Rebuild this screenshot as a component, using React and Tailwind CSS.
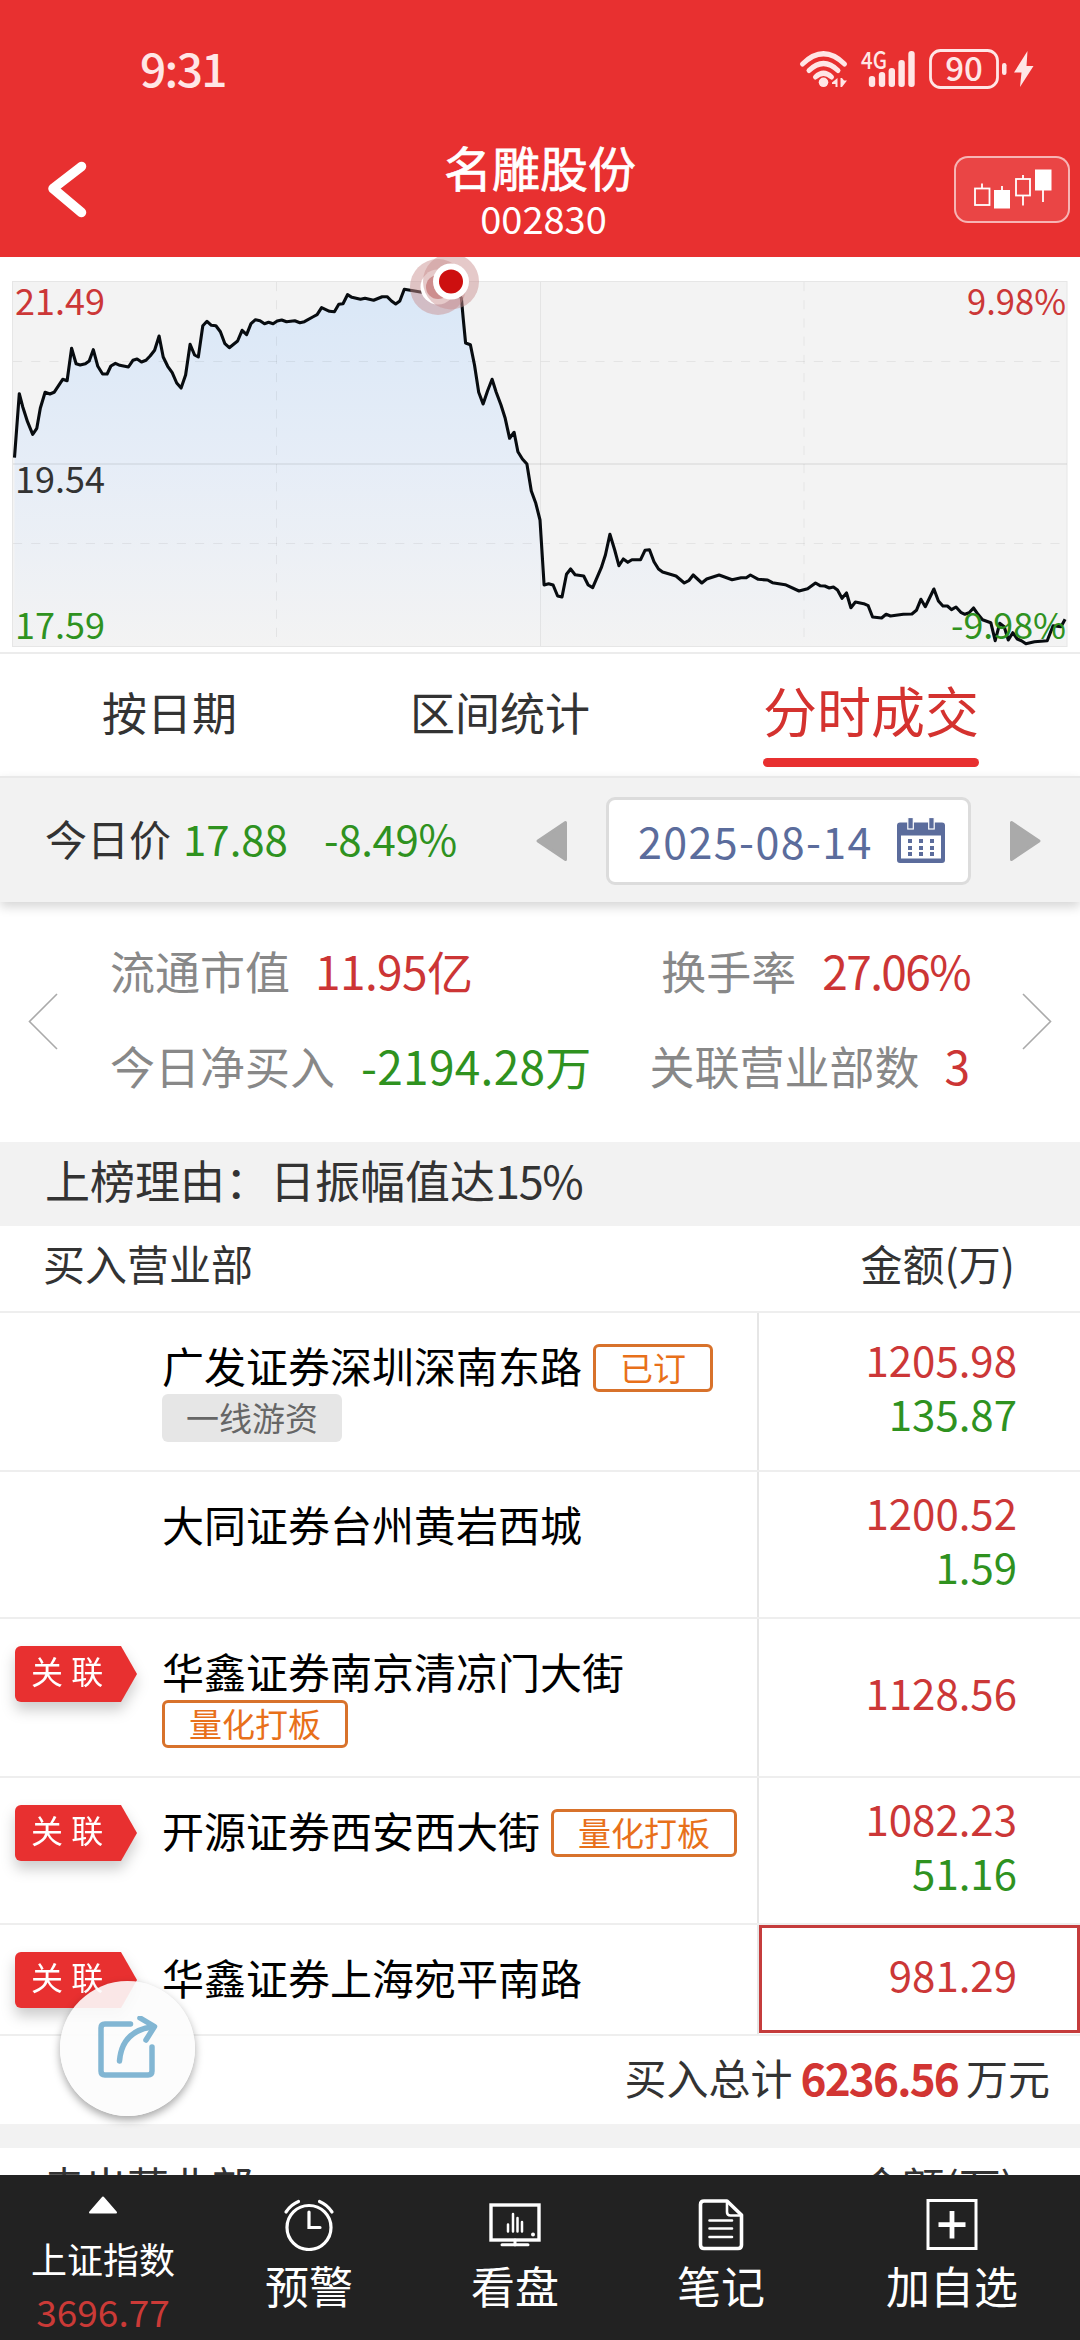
import clsx from 'clsx';

const PRICE_LINE =
  '14.5,200.7 19.3,136.7 22.7,149.7 27.5,164.7 32.7,177.3 36.8,171.3 40.3,151.3 45.1,135.3 49.9,137 54.1,135.3 62.7,122.3 67.1,123.7 71.6,91.3 76.1,106.7 80.2,108 85.4,106.7 89.2,104 93.3,92.7 97.8,109.3 102.6,117 107.1,117 110.9,109 115.4,106.3 119.8,108.3 128.4,110 132.9,103.3 137.1,102 141.5,105 146,103.3 150.1,99 154.6,93.3 159.1,79 163.2,100 167.7,109.3 172.2,115.7 176.7,126 181.1,131 185.6,118 190.1,87.3 194.6,98 198.3,100 202.8,68.7 207,64.3 211.4,68.3 215.9,68.7 220.4,74.7 224.9,86.7 229.3,90.7 237.6,84 242.1,73.3 246.6,77.7 251,66.7 255.5,62.7 260,63.7 264.5,66.7 268.6,65.3 273.1,66.7 277.2,64 281.7,63 286.5,64.7 294.8,63.7 299.9,65.7 304.4,64.7 312.7,60 317.1,57.7 321.6,50.7 329.5,54.3 334.4,54.7 338.8,47.3 343,46.7 347.5,37.7 351.9,40.3 360.5,42.3 365,41.3 373.6,43.3 382.2,39.7 387.1,39.7 391.5,44 395.7,47 399.8,44 404.3,32.3 413.2,33.7 421.8,35.3 450.8,24.3 461.4,41.3 463.2,61.3 465.6,86 470.4,87.7 474.5,108 478.7,135.3 483.1,147 487.6,133.7 492.1,122.3 496.2,135.3 501,148 505.2,161.3 509.6,181.3 514.1,175.3 517.9,194.7 522.4,202 526.9,207 531.3,234 535.8,246.3 540,263 544.1,328 548.6,326.7 553.1,328 557.6,339 562,340 566.5,317.3 570.6,312 575.1,317.7 583.7,319 588.2,328 592.7,330.7 601.3,310.7 605.4,298 609.9,277.3 614.7,293 618.9,308.7 623.3,302 627.8,305.3 631.9,302.7 640.6,302.7 645,293.3 649.5,292.7 654,304.7 658.5,312 662.6,315 676,319 684.3,326 689.1,323.3 693.2,318 701.8,326 706.7,322 719.1,318 732.1,322.7 741.1,320.7 746.3,320.7 750.4,318 758.3,322.3 767.6,323 772.4,325.7 785.2,327.7 799,334 807.6,331.7 815.5,326 820,328.7 824.8,329 829.3,331 833.4,330 837.5,333 842,341.3 846.5,336 850.9,350.7 855.4,345 863.7,346.7 868.2,348.7 872.6,360 881.6,361 886.1,357.3 890.5,359 903.3,357.3 911.9,357 916.4,353.3 920.9,342.3 925.3,349.7 933.9,332 938.4,344 942.9,349 947.4,349 951.5,352.7 956,350 960.8,355.3 964.9,357.3 969.1,355.7 973.5,351 978,357.3 982.5,362.7 990.8,365.7 995.2,383.7 999.7,366.3 1004.2,369.7 1008.3,383 1012.8,375.7 1017.3,382 1021.4,383.7 1025.9,386.7 1034.5,384.7 1047.2,383.7 1053.1,368.7 1061,369.7 1065.1,362.3';

const rows = [
  {
    name: '广发证券深圳深南东路',
    height: 'h-[159px]',
    tags: [{ text: '已订', type: 'orange' }, { text: '一线游资', type: 'gray' }],
    buy: '1205.98',
    sell: '135.87',
  },
  { name: '大同证券台州黄岩西城', height: 'h-[147px]', tags: [], buy: '1200.52', sell: '1.59' },
  {
    name: '华鑫证券南京清凉门大街',
    height: 'h-[159px]',
    linked: true,
    tags: [{ text: '量化打板', type: 'orange' }],
    buy: '1128.56',
  },
  {
    name: '开源证券西安西大街',
    height: 'h-[147px]',
    linked: true,
    tags: [{ text: '量化打板', type: 'orange' }],
    buy: '1082.23',
    sell: '51.16',
  },
  { name: '华鑫证券上海宛平南路', height: 'h-[111px]', linked: true, tags: [], buy: '981.29', active: true },
];

function StatusBar() {
  return (
    <div className="h-[140px] pt-[42px] pl-[140px] pr-[44px] flex justify-between text-[#ffe6e6]">
      <span className="text-[46px] leading-[50px] font-medium tracking-[-1.6px]">9:31</span>
      <svg width="236" height="44" viewBox="800 47 236 44" className="mt-[5px] overflow-visible" fill="currentColor">
        {/* wifi */}
        <g fill="none" stroke="currentColor" strokeWidth="5" strokeLinecap="round">
          <path d="M802.5 64 Q823.5 43.5 844.5 64" />
          <path d="M809 70.5 Q823.5 56.5 838 70.5" />
          <path d="M815.5 77 Q823.5 69.5 831.5 77" />
        </g>
        <circle cx="823.5" cy="82.3" r="4.8" />
        <path d="M837.5 78v9h-2v-3h-3.5v-1.5zM840.5 78h1.5l2 2.5h3l-5 6.5h-1.5z" />
        {/* signal */}
        <text x="861" y="69" fontSize="24" fontWeight="500" textLength="26" lengthAdjust="spacingAndGlyphs">4G</text>
        <rect x="868.8" y="76" width="6.4" height="11" rx="3" />
        <rect x="878.8" y="72" width="6.4" height="15" rx="3" />
        <rect x="888.6" y="68" width="6.4" height="19" rx="3" />
        <rect x="898.4" y="60" width="6.4" height="27" rx="3" />
        <rect x="908.3" y="51" width="6.4" height="36" rx="3" />
        {/* battery */}
        <rect x="930.5" y="50.5" width="67" height="37" rx="10" fill="none" stroke="currentColor" strokeWidth="2.8" />
        <rect x="1002" y="63" width="4.5" height="12" rx="2.2" />
        <text x="964" y="80.8" fontSize="33" fontWeight="500" textAnchor="middle">90</text>
        <path d="M1027.5 51 L1014 72.5 H1021.5 L1020 87 L1033.5 66 H1026.5 Z" />
      </svg>
    </div>
  );
}

function Header() {
  return (
    <header className="h-[257px] bg-[#e83030] text-white">
      <StatusBar />
      <div className="h-[117px] pl-[46px] pr-[10px] flex justify-between">
        <svg width="42" height="62" viewBox="0 0 42 62" className="mt-[18px] mr-[74px]" fill="none" stroke="currentColor" strokeWidth="9.5" strokeLinecap="round" strokeLinejoin="round">
          <path d="M35.5 8.5 L7 30.5 L35.5 54.5" />
        </svg>
        <div className="flex flex-col items-center mr-[36px]">
          <h1 className="text-[48px] leading-[52px] [-webkit-text-stroke:0.7px_white]">名雕股份</h1>
          <span className="text-[38px] leading-[52px] pl-[7px]">002830</span>
        </div>
        <div className="mt-[16px] w-[116px] h-[67px] rounded-[14px] border-2 border-white/60 bg-white/10">
          <svg width="112" height="63" viewBox="956 158 112 63">
            <g fill="none" stroke="white" strokeWidth="1.8">
              <path d="M982 183.5V188" />
              <rect x="975" y="188.5" width="14.5" height="16.5" />
              <path d="M1002 186v5" />
              <path d="M1023 175v4M1023 196v9.5" />
              <rect x="1016" y="179" width="14" height="16.5" />
              <path d="M1043 190v12" />
            </g>
            <rect x="994" y="190" width="16" height="18.5" fill="white" />
            <rect x="1035" y="169.5" width="16.5" height="21" fill="white" />
          </svg>
        </div>
      </div>
    </header>
  );
}

function Chart() {
  return (
    <svg width="1080" height="397" viewBox="0 0 1080 395" className="block border-b-2 border-[#ececec]" fontSize="36">
      <defs>
        <linearGradient id="area" x1="0" y1="24" x2="0" y2="389" gradientUnits="userSpaceOnUse">
          <stop offset="0" stopColor="#d9e7f7" />
          <stop offset="0.5" stopColor="#e6edf7" />
          <stop offset="1" stopColor="#f3f3f3" />
        </linearGradient>
      </defs>
      <rect x="12.5" y="24.5" width="1054.5" height="365" fill="#f3f3f3" stroke="#e6e6e6" />
      <polygon points={`14.5,389 ${PRICE_LINE} 1065.1,389`} fill="url(#area)" />
      <g stroke="#000" strokeOpacity="0.06">
        <path d="M13 207H1067" strokeWidth="2" />
        <path d="M540.5 25V389" />
        <path d="M13 104.5H1067M13 286.5H1067M276.5 25V389M804 25V389" strokeDasharray="9.2 9" />
      </g>
      <polyline points={PRICE_LINE} fill="none" stroke="#080c10" strokeWidth="3.1" strokeLinejoin="round" />
      {/* pulsing position marker and its trail */}
      <circle cx="438" cy="30" r="28" fill="#c98f8f" fillOpacity="0.48" />
      <circle cx="438" cy="30" r="17.5" fill="#fff" />
      <circle cx="438" cy="30" r="12" fill="#d28c8c" />
      <circle cx="451" cy="24.5" r="28" fill="#c98f8f" fillOpacity="0.48" />
      <circle cx="451" cy="24.5" r="18" fill="#fff" />
      <circle cx="451" cy="24.5" r="12" fill="#cd0f0f" />
      <text x="15" y="58" fill="#cc3737">21.49</text>
      <text x="15" y="236" fill="#333">19.54</text>
      <text x="15" y="382" fill="#2f921f">17.59</text>
      <text x="967" y="58" fill="#cc3737" textLength="99" lengthAdjust="spacingAndGlyphs">9.98%</text>
      <text x="951" y="382" fill="#2f921f" textLength="115" lengthAdjust="spacingAndGlyphs">-9.98%</text>
    </svg>
  );
}

function Tabs() {
  return (
    <nav className="h-[122px] pl-[102px] pr-[101px] flex justify-between items-start text-[45px] leading-[64px] text-[#333]">
      <span className="pt-[26px]">按日期</span>
      <span className="pt-[26px]">区间统计</span>
      <span className="pt-[24px] text-[54px] text-[#d4322f]">
        分时成交
        <i className="block w-[216px] h-[9px] mt-[16px] rounded-full bg-[#e83030]" />
      </span>
    </nav>
  );
}

function DateBar() {
  return (
    <div className="h-[126px] pl-[45px] pr-[39px] pt-[1px] flex items-center bg-[#f2f2f2] border-t-2 border-[#e9e9e9] shadow-[0_5px_10px_rgba(0,0,0,0.16)] text-[42px] leading-[60px] text-[#333]">
      <span className="pb-[6px]">今日价</span>
      <span className="pb-[6px] ml-[12px] text-[#2f921f]">17.88</span>
      <span className="pb-[6px] ml-[36px] tracking-[-0.3px] text-[#2f921f]">-8.49%</span>
      <svg width="33" height="42" viewBox="0 0 33 42" className="ml-auto mr-[37px]">
        <path d="M2 21 L29.5 2.5 V39.5 Z" fill="#aaa" stroke="#aaa" strokeWidth="3" strokeLinejoin="round" />
      </svg>
      <div className="w-[365px] h-[88px] pl-[29px] pr-[23px] pb-[2px] flex items-center justify-between rounded-[9px] bg-white border-3 border-[#dcdcdc] text-[43px] tracking-[1.4px] text-[#5b6c9c]">
        <span>2025-08-14</span>
        <svg width="48" height="46" viewBox="0 0 48 46" fill="#5b6c9c">
          <path d="M3 5.5H45Q48 5.5 48 8.5V43Q48 46 45 46H3Q0 46 0 43V8.5Q0 5.5 3 5.5ZM4 18.5V41.5H44V18.5Z" fillRule="evenodd" />
          <g stroke="white" strokeWidth="1.2">
            <rect x="10.8" y="0.5" width="5.5" height="11.5" />
            <rect x="31.7" y="0.5" width="5.5" height="11.5" />
          </g>
          <path d="M11 22h4v4h-4zM22 22h4v4h-4zM33 22h4v4h-4zM11 29h4v4h-4zM22 29h4v4h-4zM33 29h4v4h-4zM11 35h4v4h-4zM22 35h4v4h-4zM33 35h4v4h-4z" />
        </svg>
      </div>
      <svg width="33" height="42" viewBox="0 0 33 42" className="ml-[37px]">
        <path d="M31 21 L3.5 2.5 V39.5 Z" fill="#aaa" stroke="#aaa" strokeWidth="3" strokeLinejoin="round" />
      </svg>
    </div>
  );
}

function Summary() {
  return (
    <section className="h-[240px] px-[28px] flex items-start">
      <svg width="30" height="57" viewBox="0 0 30 57" className="mt-[91px]" fill="none" stroke="#aaa" strokeWidth="1.6">
        <path d="M29 1 L1.5 28.5 L29 56" />
      </svg>
      <div className="flex-1 pl-[52px] pr-[52px] pt-[21px] text-[45px] leading-[95px] text-[#888]">
        <div className="flex justify-between">
          <p>流通市值<b className="ml-[25px] font-normal text-[46px] tracking-[-0.6px] text-[#cc3535]">11.95亿</b></p>
          <p>换手率<b className="ml-[26px] font-normal text-[46px] tracking-[-1.6px] text-[#cc3535]">27.06%</b></p>
        </div>
        <div className="flex justify-between">
          <p>今日净买入<b className="ml-[26px] font-normal text-[46px] tracking-[0.3px] text-[#2f921f]">-2194.28万</b></p>
          <p>关联营业部数<b className="ml-[25px] font-normal text-[46px] text-[#cc3535]">3</b></p>
        </div>
      </div>
      <svg width="30" height="57" viewBox="0 0 30 57" className="mt-[91px]" fill="none" stroke="#aaa" strokeWidth="1.6">
        <path d="M1 1 L28.5 28.5 L1 56" />
      </svg>
    </section>
  );
}

function TableHead({ title }) {
  return (
    <div className="h-[87px] pl-[43px] pr-[65px] pt-[6px] flex justify-between border-b-2 border-[#eee] text-[42px] leading-[62px] text-[#333]">
      <span>{title}</span>
      <span>金额(万)</span>
    </div>
  );
}

function Ribbon() {
  return (
    <div className="drop-shadow-[0_8px_7px_rgba(0,0,0,0.2)]">
      <div className="w-[122px] h-[56px] pl-[16px] rounded-l-[6px] bg-[#e83030] text-white text-[32px] leading-[49px] [word-spacing:1px] [clip-path:polygon(0_0,106px_0,100%_50%,106px_100%,0_100%)]">
        关 联
      </div>
    </div>
  );
}

function Tag({ text, type }) {
  return (
    <span
      className={clsx(
        'h-[48px] mb-[2px] inline-flex items-center px-[24px] rounded-[6px] text-[33px] leading-[40px] pb-[3px]',
        type === 'orange' ? 'border-3 border-[#d8722b] text-[#e8701a]' : 'bg-[#e6e6e6] text-[#666]'
      )}
    >
      {text}
    </span>
  );
}

function Row({ row }) {
  return (
    <div className={clsx('flex border-b-2 border-[#eee]', row.height)}>
      <div className="w-[759px] flex items-start border-r-2 border-[#e6e6e6]">
        <div className="w-[162px] pl-[15px] pt-[27px]">{row.linked && <Ribbon />}</div>
        <div className="flex-1 pt-[31px] flex flex-wrap items-start gap-x-[11px] text-[42px] text-black">
          <span className="h-[50px] leading-[41px]">{row.name}</span>
          {row.tags.map((tag) => (
            <Tag key={tag.text} text={tag.text} type={tag.type} />
          ))}
        </div>
      </div>
      <div
        className={clsx(
          'flex-1 flex flex-col justify-center items-end text-[42px] leading-[54px]',
          row.active ? 'mb-[1px] border-3 border-[#c53c3c] pr-[60px] pb-[10px]' : 'pr-[63px] pb-[12px]'
        )}
      >
        <span className="text-[#cc3737]">{row.buy}</span>
        {row.sell && <span className="text-[#2f921f]">{row.sell}</span>}
      </div>
    </div>
  );
}

function ShareButton() {
  return (
    <div className="absolute left-[60px] top-[1981px] w-[135px] h-[135px] rounded-full bg-[#fcfcfc]/90 shadow-[0_4px_9px_rgba(0,0,0,0.35)] flex items-center justify-center">
      <svg width="62" height="66" viewBox="97 2017 62 66" fill="none" stroke="#82b6d3" strokeWidth="5.5" strokeLinecap="round" strokeLinejoin="round">
        <path d="M130.5 2025H105Q101 2025 101 2029V2072Q101 2076 105 2076H148Q152 2076 152 2072V2048" />
        <path d="M119.5 2062Q122 2032 152 2028" />
        <path d="M140 2019L154.5 2027.5L146 2041" />
      </svg>
    </div>
  );
}

function BottomNav() {
  return (
    <footer className="absolute left-0 top-[2175px] w-[1080px] h-[165px] grid grid-cols-[206px_206px_206px_206px_256px] bg-[#222] text-white text-[44px] leading-[60px]">
      <div className="flex flex-col items-center pt-[21px]">
        <svg width="30" height="18" viewBox="0 0 30 18">
          <path d="M15 1.5 L28 16.5 H2 Z" fill="white" stroke="white" strokeWidth="2" strokeLinejoin="round" />
        </svg>
        <span className="mt-[18px] text-[36px] leading-[52px]">上证指数</span>
        <span className="text-[37px] leading-[54px] text-[#cb3a37]">3696.77</span>
      </div>
      <div className="flex flex-col items-center pt-[24px]">
        <svg width="52" height="52" viewBox="0 0 52 52" fill="none" stroke="white" strokeWidth="3.2" strokeLinecap="round">
          <circle cx="26" cy="28.5" r="22" />
          <path d="M26 13V28.5H37" />
          <path d="M3 13Q8 5.5 15.5 2.5M49 13Q44 5.5 36.5 2.5" />
        </svg>
        <span className="mt-[4px]">预警</span>
      </div>
      <div className="flex flex-col items-center pt-[24px]">
        <svg width="52" height="52" viewBox="0 0 52 52" fill="none" stroke="white" strokeWidth="3.4">
          <rect x="2" y="6" width="48" height="35" />
          <path d="M26 41v5M13 45.8H39" strokeWidth="3" strokeLinecap="round" />
          <path d="M19 25.5v7M24 15v17.5M28.5 19v13.5M33 23v9.5" strokeWidth="2.5" strokeLinecap="round" />
          <circle cx="44" cy="35.5" r="2" fill="white" stroke="none" />
        </svg>
        <span className="mt-[4px]">看盘</span>
      </div>
      <div className="flex flex-col items-center pt-[24px]">
        <svg width="46" height="52" viewBox="0 0 46 52" fill="none" stroke="white" strokeWidth="3.6" strokeLinejoin="round" strokeLinecap="round">
          <path d="M6 2H29L43.5 16V46Q43.5 49.5 40 49.5H6Q2.5 49.5 2.5 46V5.5Q2.5 2 6 2Z" />
          <path d="M29 3V13Q29 16.5 32.5 16.5H43" strokeWidth="2.6" />
          <path d="M11.5 21.5H34M11.5 29.5H34M11.5 38H34" strokeWidth="2.6" />
        </svg>
        <span className="mt-[4px]">笔记</span>
      </div>
      <div className="flex flex-col items-center pt-[24px]">
        <svg width="52" height="52" viewBox="0 0 52 52" fill="none" stroke="white">
          <rect x="2" y="1.5" width="48" height="48" strokeWidth="3" />
          <path d="M26 12V39.5M12.5 25.7H39.5" strokeWidth="4.8" />
        </svg>
        <span className="mt-[4px]">加自选</span>
      </div>
    </footer>
  );
}

export default function App() {
  return (
    <div className="relative w-[1080px] h-[2340px] overflow-hidden bg-white font-['Noto_Sans_CJK_SC',sans-serif]">
      <Header />
      <Chart />
      <Tabs />
      <DateBar />
      <Summary />
      <div className="h-[84px] pl-[45px] bg-[#f2f2f2] text-[45px] leading-[76px] text-[#333]">
        上榜理由：日振幅值达<span className="tracking-[-1.3px]">15%</span>
      </div>
      <TableHead title="买入营业部" />
      {rows.map((row) => (
        <Row key={row.name} row={row} />
      ))}
      <div className="h-[88px] pr-[30px] flex justify-end items-start text-[42px] leading-[82px] text-[#333]">
        <span>买入总计</span>
        <b className="ml-[8px] mr-[8px] font-bold text-[44px] tracking-[-1.8px] text-[#d23533]">6236.56</b>
        <span>万元</span>
      </div>
      <div className="h-[24px] bg-[#f2f2f2]" />
      <TableHead title="卖出营业部" />
      <BottomNav />
      <ShareButton />
    </div>
  );
}
